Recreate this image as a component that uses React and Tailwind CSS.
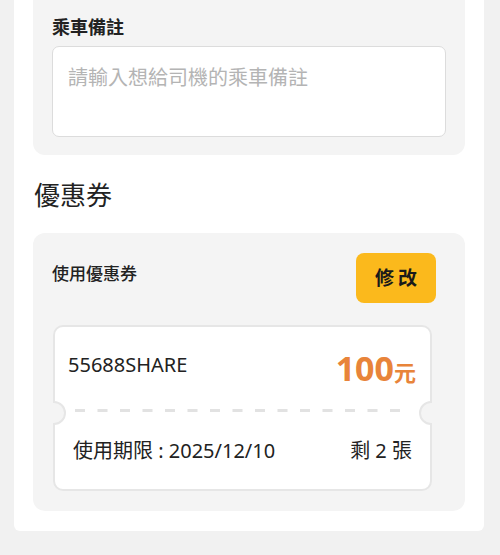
import React from 'react';

const FONT = { fontFamily: '"Noto Sans", "Noto Sans CJK TC", sans-serif' };

function Notch({ side }) {
  return (
    <div
      className={`absolute top-[74px] h-[24px] w-[13px] overflow-hidden ${
        side === 'left' ? 'left-[-2px]' : 'right-[-2px]'
      }`}
    >
      <div
        className={`absolute top-0 h-[24px] w-[24px] rounded-full border-2 border-[#e6e6e6] bg-[#f4f4f4] ${
          side === 'left' ? 'left-[-11px]' : 'right-[-11px]'
        }`}
      />
    </div>
  );
}

function Ticket() {
  return (
    <div className="relative ml-[1px] w-[379px] h-[166px] rounded-[10px] border-2 border-[#e6e6e6] bg-white">
      <div className="flex items-center justify-between pl-[13px] pr-[14px] h-[76px]">
        <span className="text-[20px] leading-[28px] text-[#222]">55688SHARE</span>
        <span className="flex items-baseline font-bold text-[#e8843a] pt-[6px]">
          <span className="text-[34px] leading-[40px]">100</span>
          <span className="text-[22px]">元</span>
        </span>
      </div>
      <div className="mt-[6px] flex justify-center">
        <svg width="336" height="3">
          <line x1="0" y1="1.5" x2="336" y2="1.5" stroke="#e2e2e2" strokeWidth="3" strokeDasharray="10 12.5" />
        </svg>
      </div>
      <div className="flex items-center justify-between pl-[18px] pr-[18px] pt-[25px]">
        <span className="text-[20px] leading-[28px] text-[#222]">使用期限 : 2025/12/10</span>
        <span className="text-[20px] leading-[28px] text-[#222]">剩 2 張</span>
      </div>
      <Notch side="left" />
      <Notch side="right" />
    </div>
  );
}

export default function App() {
  return (
    <div className="min-h-[555px] w-[500px] bg-[#f1f1f1]" style={FONT}>
      <div className="mx-[14px] w-[470px] h-[531px] rounded-b-[6px] bg-white px-[19px]">
        <div className="rounded-b-[12px] bg-[#f4f4f4] px-[19px] pt-[15px] pb-[18px]">
          <div className="text-[18px] font-bold leading-[24px] text-[#222]">乘車備註</div>
          <div className="mt-[7px] h-[91px] rounded-[7px] border border-[#dcdcdc] bg-white px-[15px] pt-[17px]">
            <span className="text-[20px] leading-[28px] text-[#b4b4b4]">請輸入想給司機的乘車備註</span>
          </div>
        </div>

        <h2 className="mt-[22px] mb-[20px] pl-px text-[26px] leading-[36px] font-normal text-[#222]">優惠券</h2>

        <div className="rounded-[12px] bg-[#f4f4f4] pl-[19px] pr-[29px] pt-[20px] pb-[20px]">
          <div className="flex items-center justify-between">
            <span className="mb-[8px] text-[17px] font-medium leading-[24px] text-[#222]">使用優惠券</span>
            <button className="h-[50px] w-[80px] rounded-[8px] bg-[#fbb91c] text-[19px] font-bold tracking-[4px] pl-[4px] text-[#1a1a1a]">
              修改
            </button>
          </div>
          <div className="mt-[22px]">
            <Ticket />
          </div>
        </div>
      </div>
    </div>
  );
}
